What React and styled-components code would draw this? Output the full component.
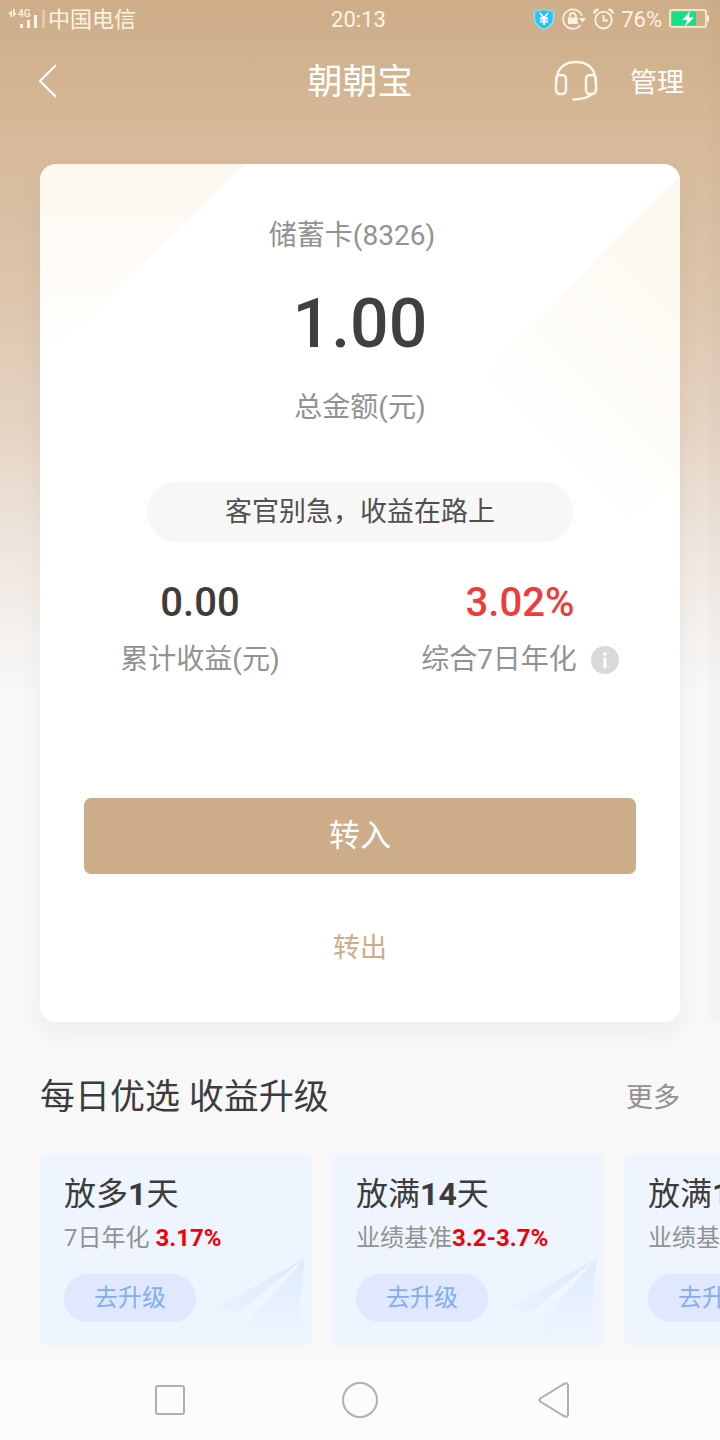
import React from 'react';
import styled, { createGlobalStyle } from 'styled-components';

const GlobalStyle = createGlobalStyle`
  * {
    box-sizing: border-box;
  }

  body {
    margin: 0;
    background-color: #f8f8f8;
    color: #3c3c3c;
    font-family: Roboto, 'Noto Sans CJK SC', sans-serif;
  }

  button {
    border: none;
    padding: 0;
    background: none;
    color: inherit;
    font: inherit;
  }

  svg {
    display: block;
    flex: none;
  }
`;

const Page = styled.div`
  display: flex;
  flex-direction: column;
  min-height: 100vh;
  background: linear-gradient(
    #cead88 0px,
    #d6ba99 140px,
    #dcc3a9 270px,
    #e5d3c2 420px,
    #eee5dd 540px,
    #f8f8f8 690px
  );
`;

const Hero = styled.div`
  position: relative;

  &::after {
    content: '';
    position: absolute;
    top: 0;
    right: 0;
    bottom: 0;
    width: 14px;
    background: linear-gradient(
      to right,
      rgba(0, 0, 0, 0),
      rgba(0, 0, 0, 0.02) 8px,
      rgba(0, 0, 0, 0.01)
    );
  }
`;

const StatusBar = styled.div`
  display: grid;
  grid-template-columns: 1fr auto 1fr;
  align-items: center;
  height: 37px;
  padding: 0 11px 0 8px;
  color: #fff3e2;
`;

const StatusGroup = styled.div`
  display: flex;
  align-items: center;
  justify-content: ${(props) => (props.$end ? 'flex-end' : 'flex-start')};
  gap: ${(props) => (props.$end ? '7px' : '2px')};
`;

const StatusText = styled.span`
  padding-top: 3px;
  font-size: 22px;
  line-height: 32px;
`;

const Header = styled.header`
  display: grid;
  grid-template-columns: 1fr auto 1fr;
  align-items: center;
  height: 87px;
  padding: 0 36px;
  color: #fff;
`;

const Title = styled.h1`
  margin: 0;
  padding-top: 5px;
  font-size: 35px;
  font-weight: 400;
  line-height: 48px;
`;

const HeaderActions = styled.div`
  display: flex;
  align-items: center;
  justify-content: flex-end;
  gap: 32px;
`;

const IconButton = styled.button`
  justify-self: start;
`;

const TextButton = styled.button`
  padding-top: 5px;
  font-size: 27px;
  line-height: 40px;
`;

const Card = styled.section`
  display: flex;
  flex-direction: column;
  align-items: center;
  margin: 40px 40px 0;
  padding: 52px 44px 54px;
  border-radius: 16px;
  background-color: #fff;
  box-shadow: 0 8px 24px rgba(0, 0, 0, 0.05);
  position: relative;
  overflow: hidden;
`;

const Shine = styled.svg`
  position: absolute;
  top: 0;
  left: 0;
  width: 100%;
`;

const Caption = styled.div`
  display: flex;
  align-items: center;
  gap: 14px;
  color: #929292;
  font-size: 28px;
  line-height: 40px;
`;

const CardName = styled(Caption)`
  padding-right: 16px;
`;

const Total = styled.div`
  margin: 28px 0 24px;
  color: #404040;
  font-size: 68px;
  font-weight: 500;
  line-height: 80px;
`;

const Notice = styled.p`
  width: 426px;
  max-width: 100%;
  margin: 54px 0 37px;
  border-radius: 30px;
  background-color: #f7f7f7;
  color: #505050;
  font-size: 27px;
  line-height: 60px;
  text-align: center;
  position: relative;
`;

const Stats = styled.div`
  display: grid;
  grid-template-columns: 1fr 1fr;
  align-self: stretch;
  margin: 0 -44px 118px;
`;

const Stat = styled.div`
  display: flex;
  flex-direction: column;
  align-items: center;
  gap: 13px;
`;

const StatValue = styled.div`
  color: ${(props) => (props.$up ? '#ee3b3b' : '#3c3c3c')};
  font-size: 40px;
  font-weight: 500;
  line-height: 48px;
`;

const TransferIn = styled.button`
  align-self: stretch;
  height: 76px;
  border-radius: 7px;
  background-color: #cdad89;
  color: #fff;
  font-size: 31px;
  line-height: 48px;
`;

const TransferOut = styled.button`
  margin-top: 54px;
  color: #cdad89;
  font-size: 27px;
  line-height: 40px;
`;

const SectionHeader = styled.div`
  display: flex;
  align-items: center;
  justify-content: space-between;
  margin: 52px 40px 32px;
`;

const SectionTitle = styled.h2`
  margin: 0;
  font-size: 35px;
  font-weight: 400;
  line-height: 48px;
`;

const MoreLink = styled.a`
  color: #929292;
  font-size: 27px;
  line-height: 40px;
  text-decoration: none;
`;

const Products = styled.div`
  display: flex;
  gap: 20px;
  padding: 0 40px;
  margin-bottom: 14px;
  overflow-x: auto;
  scrollbar-width: none;
`;

const Product = styled.article`
  flex: none;
  width: 272px;
  padding: 20px 24px 24px;
  border-radius: 8px;
  background-color: #eef5ff;
  position: relative;
  white-space: nowrap;
`;

const ProductName = styled.h3`
  margin: 0 0 8px;
  font-size: 32px;
  font-weight: 400;
  line-height: 40px;
`;

const ProductRate = styled.div`
  margin-bottom: 20px;
  color: #929292;
  font-size: 24px;
  line-height: 32px;

  strong {
    color: #f50008;
  }
`;

const UpgradeButton = styled.button`
  width: 132px;
  height: 48px;
  border-radius: 24px;
  background-color: #e0e8ff;
  color: #82aef0;
  font-size: 24px;
  line-height: 32px;
`;

const Plane = styled.svg`
  position: absolute;
  right: 6px;
  bottom: 8px;
`;

const SystemNav = styled.nav`
  display: flex;
  align-items: center;
  justify-content: space-around;
  height: 80px;
  margin-top: auto;
  padding: 0 73px;
  background-color: #fcfcfc;
`;

const SignalIcon = () => (
  <svg width="38" height="20" viewBox="0 0 38 20" fill="#fff3e2">
    <path d="M0 5l4-4v7H2.200V5zM5 0h1.800v4H9L5 8z" />
    <text x="10" y="8" fontSize="10" fontWeight="500">4G</text>
    <path d="M12 15h3v4h-3zM19 11h3v8h-3zM26 6h3v13h-3z" />
    <path d="M34 1h3v18h-3z" opacity="0.4" />
  </svg>
);

const ShieldIcon = () => (
  <svg width="22" height="22" viewBox="0 0 22 22">
    <path
      d="M11 1c3 2 6 2 9.500 2v8c0 5-4 8-9.500 10.500C5.500 19 1.500 16 1.500 11V3C5 3 8 3 11 1z"
      fill="#2fc0f5"
      stroke="#8edcf5"
      strokeWidth="1.500"
    />
    <path
      d="M7 5l4 5 4-5M11 10v7M7 10.500h8M7 13.500h8"
      fill="none"
      stroke="#fff"
      strokeWidth="1.800"
    />
  </svg>
);

const LockIcon = () => (
  <svg width="24" height="22" viewBox="0 0 24 22" fill="none" stroke="#fff3e2">
    <path d="M20 8A9.700 9.700 0 1 0 18.500 17" strokeWidth="1.600" />
    <path d="M7.800 10V8a3 3 0 0 1 6 0v2" strokeWidth="1.800" />
    <path d="M6 9.500h9.600V16H6zM17 10h7l-3.500 4.500z" fill="#fff3e2" stroke="none" />
  </svg>
);

const AlarmIcon = () => (
  <svg
    width="21"
    height="22"
    viewBox="0 0 21 22"
    fill="none"
    stroke="#fff3e2"
    strokeWidth="1.800"
  >
    <circle cx="10.500" cy="12" r="8.300" />
    <path d="M10.500 7v5.500H15" />
    <path d="M1 5.500C1.500 3 3 1.700 5.500 1.500M20 5.500c-.5-2.500-2-3.800-4.500-4" strokeWidth="2.400" />
  </svg>
);

const BatteryIcon = () => (
  <svg width="40" height="20" viewBox="0 0 40 20">
    <rect x="1" y="1" width="36" height="17" rx="2" fill="none" stroke="#fff3e2" strokeWidth="1.500" />
    <path d="M38 6.500h2v6h-2z" fill="#fff3e2" />
    <path d="M2.500 2.500H27v14H2.500z" fill="#14e087" />
    <path d="M21 2l-8 9h5l-2 6.500L25 8.500h-5z" fill="#fff" />
  </svg>
);

const BackIcon = () => (
  <svg width="22" height="34" viewBox="0 0 22 34" fill="none" stroke="#fff" strokeWidth="2">
    <path d="M20 1L4 17l16 16" />
  </svg>
);

const HeadsetIcon = () => (
  <svg
    width="44"
    height="42"
    viewBox="0 0 44 42"
    fill="none"
    stroke="#fff8ee"
    strokeWidth="2.400"
    strokeLinecap="round"
  >
    <path d="M2.500 21C2.500 8 11 2 22 2s19.500 6 19.500 19" />
    <rect x="2" y="15" width="10" height="19" rx="4" />
    <rect x="32" y="15" width="10" height="19" rx="4" />
    <path d="M37.500 34c-3 4-9 5-18 5.500" />
  </svg>
);

const InfoIcon = () => (
  <svg width="28" height="28" viewBox="0 0 28 28">
    <circle cx="14" cy="14" r="14" fill="#d9d9d9" />
    <path d="M12.500 6.500h3v3h-3zM12.500 11.500h3V22h-3z" fill="#fff" />
  </svg>
);

const PaperPlane = () => (
  <Plane width="88" height="80" viewBox="0 0 88 80">
    <defs>
      <linearGradient id="wing" x1="1" y1="0" x2="0" y2="1">
        <stop offset="0" stopColor="#dce9fc" />
        <stop offset="1" stopColor="#e9f2ff" />
      </linearGradient>
      <linearGradient id="body" x1="0" y1="0" x2="0" y2="1">
        <stop offset="0" stopColor="#deebfd" />
        <stop offset="1" stopColor="#edf4ff" />
      </linearGradient>
    </defs>
    <path d="M87 0L0 49l19 7z" fill="url(#wing)" />
    <path d="M87 0L29 66l5 3v10l9-8 36 3z" fill="url(#body)" />
    <path d="M87 0L19 56l10 4z" fill="#eff6ff" />
  </Plane>
);

const CardShine = () => (
  <Shine viewBox="0 0 640 400">
    <defs>
      <linearGradient id="corner" x1="0" y1="0" x2="0" y2="1">
        <stop offset="0" stopColor="#fdf8ef" />
        <stop offset="1" stopColor="#fff" />
      </linearGradient>
      <linearGradient
        id="shine"
        gradientUnits="userSpaceOnUse"
        x1="650"
        y1="110"
        x2="480"
        y2="280"
      >
        <stop offset="0" stopColor="#fdf9f0" />
        <stop offset="1" stopColor="#fff" />
      </linearGradient>
    </defs>
    <path d="M0 0h205L0 200z" fill="url(#corner)" />
    <path d="M640 12v298l-90 90H252z" fill="url(#shine)" />
  </Shine>
);

const products = [
  { id: 1, name: '放多', days: '1', label: '7日年化 ', rate: '3.17%' },
  { id: 2, name: '放满', days: '14', label: '业绩基准', rate: '3.2-3.7%' },
  { id: 3, name: '放满', days: '180', label: '业绩基准', rate: '3.5-4%' },
];

const ProductItem = (props) => {
  const { item } = props;

  return (
    <Product>
      <PaperPlane />
      <ProductName>
        {item.name}
        <strong>{item.days}</strong>天
      </ProductName>
      <ProductRate>
        {item.label}
        <strong>{item.rate}</strong>
      </ProductRate>
      <UpgradeButton>去升级</UpgradeButton>
    </Product>
  );
};

const App = () => {
  return (
    <Page>
      <GlobalStyle />
      <Hero>
        <StatusBar>
          <StatusGroup>
            <SignalIcon />
            <StatusText>中国电信</StatusText>
          </StatusGroup>
          <StatusText>20:13</StatusText>
          <StatusGroup $end>
            <ShieldIcon />
            <LockIcon />
            <AlarmIcon />
            <StatusText>76%</StatusText>
            <BatteryIcon />
          </StatusGroup>
        </StatusBar>

        <Header>
          <IconButton aria-label="返回">
            <BackIcon />
          </IconButton>
          <Title>朝朝宝</Title>
          <HeaderActions>
            <IconButton aria-label="客服">
              <HeadsetIcon />
            </IconButton>
            <TextButton>管理</TextButton>
          </HeaderActions>
        </Header>

        <Card>
          <CardShine />
          <CardName>储蓄卡(8326)</CardName>
          <Total>1.00</Total>
          <Caption>总金额(元)</Caption>
          <Notice>客官别急，收益在路上</Notice>
          <Stats>
            <Stat>
              <StatValue>0.00</StatValue>
              <Caption>累计收益(元)</Caption>
            </Stat>
            <Stat>
              <StatValue $up>3.02%</StatValue>
              <Caption>
                综合7日年化
                <InfoIcon />
              </Caption>
            </Stat>
          </Stats>
          <TransferIn>转入</TransferIn>
          <TransferOut>转出</TransferOut>
        </Card>
      </Hero>

      <SectionHeader>
        <SectionTitle>每日优选 收益升级</SectionTitle>
        <MoreLink href="#more">更多</MoreLink>
      </SectionHeader>
      <Products>
        {products.map((item) => (
          <ProductItem item={item} key={item.id} />
        ))}
      </Products>

      <SystemNav>
        <button aria-label="最近任务">
          <svg width="38" height="38" viewBox="0 0 38 38" fill="none" stroke="#b0b0b0" strokeWidth="2">
            <rect x="6" y="5" width="28" height="28" rx="2" />
          </svg>
        </button>
        <button aria-label="主屏幕">
          <svg width="38" height="38" viewBox="0 0 38 38" fill="none" stroke="#b0b0b0" strokeWidth="2">
            <circle cx="19" cy="19" r="17" />
          </svg>
        </button>
        <button aria-label="返回上一页">
          <svg width="38" height="38" viewBox="0 0 38 38" fill="none" stroke="#b0b0b0" strokeWidth="2">
            <path d="M9 17L32 3q4-2 4 2v28q0 4-4 2L9 21q-3-2 0-4z" />
          </svg>
        </button>
      </SystemNav>
    </Page>
  );
};

export default App;
